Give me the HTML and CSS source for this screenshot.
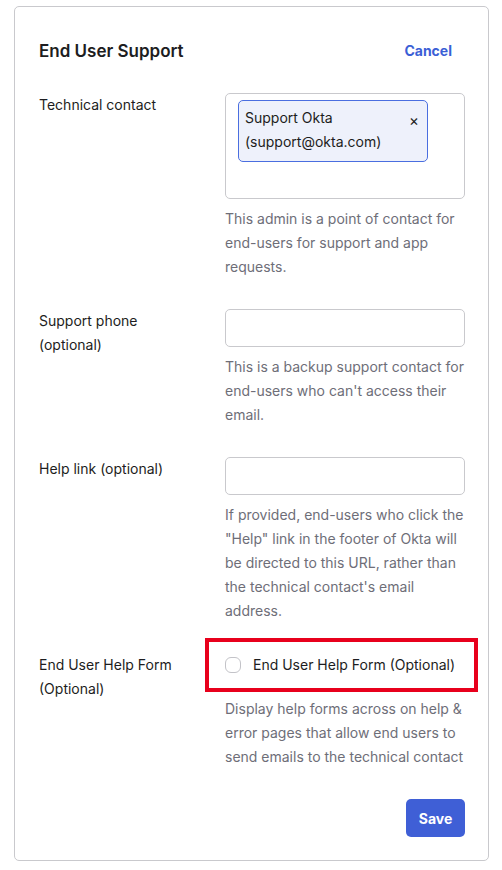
FILE: index.html
```html
<!DOCTYPE html>
<html>
<head>
<meta charset="utf-8">
<link rel="stylesheet" href="styles.css">
</head>
<body>
<div class="card">
  <div class="header">
    <h2 class="title">End User Support</h2>
    <a class="cancel" href="#">Cancel</a>
  </div>

  <div class="row">
    <div class="label">Technical contact</div>
    <div class="field">
      <div class="multiselect">
        <div class="chip">
          <span class="chip-text">Support Okta (support@okta.com)</span>
          <span class="chip-close">×</span>
        </div>
      </div>
      <p class="help">This admin is a point of contact for end-users for support and app requests.</p>
    </div>
  </div>

  <div class="row">
    <div class="label">Support phone<br>(optional)</div>
    <div class="field">
      <div class="input"></div>
      <p class="help">This is a backup support contact for end-users who can't access their email.</p>
    </div>
  </div>

  <div class="row">
    <div class="label">Help link (optional)</div>
    <div class="field">
      <div class="input"></div>
      <p class="help">If provided, end-users who click the "Help" link in the footer of Okta will be directed to this URL, rather than the technical contact's email address.</p>
    </div>
  </div>

  <div class="row">
    <div class="label">End User Help Form<br>(Optional)</div>
    <div class="field">
      <div class="check-row">
        <span class="checkbox"></span>
        <span class="check-label">End User Help Form (Optional)</span>
        <span class="highlight"></span>
      </div>
      <p class="help">Display help forms across on help &amp; error pages that allow end users to send emails to the technical contact</p>
    </div>
  </div>

  <div class="actions">
    <button class="save">Save</button>
  </div>
</div>
</body>
</html>
```
FILE: styles.css
```css
* { box-sizing: border-box; }
html, body { margin: 0; padding: 0; background: #ffffff; }
body {
  font-family: Inter, "Noto Sans", "Liberation Sans", sans-serif;
  color: #1d1d21;
  font-size: 14px;
  line-height: 24px;
  padding: 6px 13px 9px 14px;
}
.card {
  border: 1px solid #c9c9cd;
  border-radius: 5px;
  padding: 32px 23px 23px 24px;
}
.header {
  display: flex;
  justify-content: space-between;
  align-items: center;
  margin-bottom: 30px;
}
.title {
  margin: 0;
  font-size: 17px;
  font-weight: 600;
  line-height: 24px;
  color: #1d1d21;
}
.cancel {
  color: #3b5fd6;
  font-weight: 700;
  font-size: 14px;
  text-decoration: none;
  margin-right: 13px;
}
.row {
  display: grid;
  grid-template-columns: 186px 240px;
  margin-bottom: 30px;
}
.label {
  font-size: 14px;
  line-height: 24px;
  color: #1d1d21;
}
.field { position: relative; }
.multiselect {
  height: 106px;
  border: 1px solid #c9c9cd;
  border-radius: 5px;
  padding: 6px 0 0 12px;
}
.chip {
  width: 190px;
  border: 1px solid #4a6ee0;
  background: #eef1fb;
  border-radius: 5px;
  padding: 5px 8px 7px 6px;
  display: flex;
  justify-content: space-between;
  align-items: flex-start;
}
.chip-text {
  width: 150px;
  font-size: 14px;
  line-height: 24px;
  color: #1d1d21;
}
.chip-close {
  font-size: 15px;
  line-height: 20px;
  margin-top: 5px;
  color: #1d1d21;
}
.input {
  height: 38px;
  border: 1px solid #c9c9cd;
  border-radius: 5px;
}
.help {
  margin: 8px 0 0 0;
  font-size: 14px;
  line-height: 24px;
  color: #6e6e78;
}
.check-row {
  position: relative;
  display: flex;
  align-items: center;
  height: 36px;
  padding-bottom: 12px;
}
.checkbox {
  width: 16px;
  height: 16px;
  border: 1.5px solid #c3c3c8;
  border-radius: 6px;
  margin-right: 12px;
  flex: none;
}
.check-label { font-size: 14px; color: #1d1d21; }
.highlight {
  position: absolute;
  left: -20px;
  top: -15px;
  width: 273px;
  height: 54px;
  border: 4px solid #e8001c;
  pointer-events: none;
}
.actions {
  display: flex;
  justify-content: flex-end;
}
.save {
  font-family: inherit;
  background: #3f5fd6;
  color: #ffffff;
  font-weight: 700;
  font-size: 14px;
  border: none;
  border-radius: 5px;
  width: 59px;
  height: 38px;
  padding: 0;
}
```
